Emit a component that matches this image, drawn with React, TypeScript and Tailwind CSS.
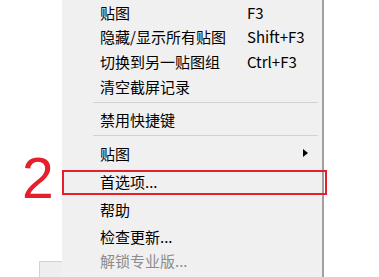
import React from "react";

type Row = { label: string; shortcut?: string; h: string; disabled?: boolean; arrow?: boolean };

const font = { fontFamily: '"Noto Sans CJK SC", "Noto Sans", sans-serif' };

function Item({ r }: { r: Row }) {
  return (
    <div className={`flex items-center ${r.h} pl-[38px] text-[15px] leading-none ${r.disabled ? "text-[#8c8c8c]" : "text-black"}`}>
      <span className="w-[147px] whitespace-nowrap">{r.label}</span>
      {r.shortcut && <span className="whitespace-nowrap">{r.shortcut}</span>}
      {r.arrow && (
        <span className="ml-[56px] flex items-center">
          <svg width="5" height="8" viewBox="0 0 5 8">
            <path d="M0 0 L5 4 L0 8 Z" fill="#000" />
          </svg>
        </span>
      )}
    </div>
  );
}

function Sep({ h }: { h: string }) {
  return (
    <div className={`flex items-center ${h} pl-[31px] pr-[4px]`}>
      <div className="h-px w-full bg-[#d2d2d2]" />
    </div>
  );
}

export default function App() {
  return (
    <div className="relative w-[379px] h-[277px] overflow-hidden bg-white" style={font}>
      <div className="absolute left-[39px] top-[261px] w-[26px] h-[20px] bg-[#eeeeee] border border-[#d2d2d2]" />
      <div className="absolute left-[62px] top-0 w-[262px] h-[277px] bg-[#f0f0f0] border-r-2 border-[#a0a0a0] flex flex-col">
        <Item r={{ label: "贴图", shortcut: "F3", h: "h-[24px]" }} />
        <Item r={{ label: "隐藏/显示所有贴图", shortcut: "Shift+F3", h: "h-[25px]" }} />
        <Item r={{ label: "切换到另一贴图组", shortcut: "Ctrl+F3", h: "h-[24px]" }} />
        <Item r={{ label: "清空截屏记录", h: "h-[26px]" }} />
        <Sep h="h-[7px]" />
        <Item r={{ label: "禁用快捷键", h: "h-[26px]" }} />
        <Sep h="h-[7px]" />
        <Item r={{ label: "贴图", arrow: true, h: "h-[28px]" }} />
        <Item r={{ label: "首选项...", h: "h-[28px]" }} />
        <Item r={{ label: "帮助", h: "h-[29px]" }} />
        <Item r={{ label: "检查更新...", h: "h-[24px]" }} />
        <Item r={{ label: "解锁专业版...", disabled: true, h: "h-[24px]" }} />
      </div>
      <div className="absolute left-[62px] top-[170px] w-[265px] h-[25px] border-2 border-[#e3202c]" />
      <div
        className="absolute left-[22px] top-[150px] text-[57px] leading-none text-[#e3202c]"
        style={{ fontFamily: '"Liberation Sans", Arial, sans-serif' }}
      >
        2
      </div>
    </div>
  );
}
